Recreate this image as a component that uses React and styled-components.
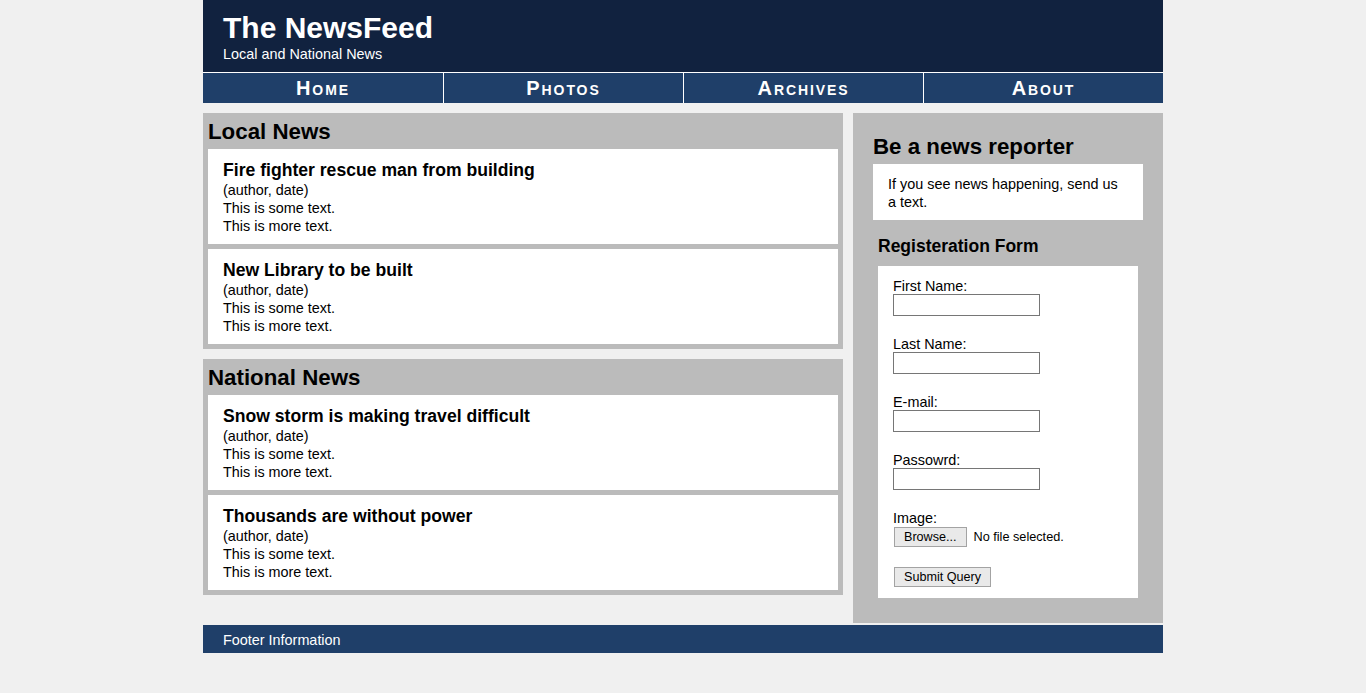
import React from "react";
import styled, { createGlobalStyle } from "styled-components";

const Global = createGlobalStyle`
  html, body { margin: 0; padding: 0; }
  body {
    background: #f0f0f0;
    font-family: "Liberation Sans", Arial, sans-serif;
    color: #000;
  }
`;

const Page = styled.div`
  width: 960px;
  margin: 0 auto;
`;

const Header = styled.header`
  background: #11223f;
  padding: 11px 20px 9px;
  color: #fff;
`;

const Title = styled.h1`
  margin: 0;
  font-size: 30px;
  line-height: 34px;
  font-weight: bold;
`;

const Subtitle = styled.div`
  font-size: 14.4px;
  line-height: 18px;
`;

const Nav = styled.nav`
  display: grid;
  grid-template-columns: repeat(4, 1fr);
  background: #1f3f69;
  border-top: 1px solid #fff;
`;

const NavItem = styled.a`
  display: block;
  height: 30px;
  line-height: 30px;
  text-align: center;
  color: #fff;
  text-decoration: none;
  font-size: 20px;
  font-weight: bold;
  font-variant: small-caps;
  letter-spacing: 1.9px;
  border-left: ${(p) => (p.$first ? "none" : "1px solid #fff")};
`;

const Main = styled.main`
  display: flex;
  align-items: flex-start;
  gap: 10px;
  margin-top: 10px;
`;

const LeftCol = styled.div`
  width: 640px;
  display: flex;
  flex-direction: column;
  gap: 10px;
`;

const Section = styled.section`
  background: #bbbbbb;
  padding: 6px 5px 5px;
  display: flex;
  flex-direction: column;
  gap: 5px;
`;

const SectionTitle = styled.h2`
  margin: 0;
  font-size: 22.3px;
  line-height: 25px;
  font-weight: bold;
`;

const Article = styled.article`
  background: #fff;
  padding: 11px 15px 9px;
`;

const ArticleTitle = styled.h3`
  margin: 0;
  font-size: 17.6px;
  line-height: 21px;
  font-weight: bold;
`;

const Line = styled.p`
  margin: 0;
  font-size: 14.4px;
  line-height: 18px;
`;

const RightCol = styled.aside`
  width: 310px;
  background: #bbbbbb;
  padding: 21px 20px 25px;
  box-sizing: border-box;
`;

const AsideTitle = styled.h2`
  margin: 0 0 5px;
  font-size: 22.3px;
  line-height: 25px;
  font-weight: bold;
`;

const Note = styled.div`
  background: #fff;
  padding: 11px 15px 9px;
  font-size: 14.4px;
  line-height: 18px;
`;

const FormWrap = styled.div`
  margin: 16px 5px 0;
`;

const FormTitle = styled.h3`
  margin: 0 0 9px;
  font-size: 17.5px;
  line-height: 21px;
  font-weight: bold;
`;

const Form = styled.form`
  background: #fff;
  padding: 10px 15px 11px;
`;

const Field = styled.div`
  margin-bottom: ${(p) => p.$gap || "18px"};
`;

const Label = styled.label`
  display: block;
  padding-top: 2px;
  font-size: 14.4px;
  line-height: 16px;
`;

const TextInput = styled.input`
  display: block;
  box-sizing: border-box;
  width: 147px;
  height: 22px;
  margin: 0;
  border: 1px solid #767676;
  background: #fff;
  padding: 1px 3px;
`;

const FileRow = styled.div`
  display: flex;
  align-items: center;
  height: 22px;
`;

const Button = styled.button`
  box-sizing: border-box;
  height: 20px;
  margin: 0 0 0 1px;
  padding: 0 9px;
  border: 1px solid #a3a3a3;
  background: #e9e9e9;
  color: #000;
  font-family: "Liberation Sans", Arial, sans-serif;
  font-size: 12.6px;
  line-height: 18px;
`;

const FileStatus = styled.span`
  margin-left: 7px;
  font-size: 12.7px;
`;

const Footer = styled.footer`
  margin-top: 2px;
  background: #1f3f69;
  color: #fff;
  height: 28px;
  box-sizing: border-box;
  padding: 2px 20px 0;
  line-height: 26px;
  font-size: 14.4px;
`;

const local = [
  "Fire fighter rescue man from building",
  "New Library to be built",
];
const national = [
  "Snow storm is making travel difficult",
  "Thousands are without power",
];

function NewsSection({ title, items }) {
  return (
    <Section>
      <SectionTitle>{title}</SectionTitle>
      {items.map((t) => (
        <Article key={t}>
          <ArticleTitle>{t}</ArticleTitle>
          <Line>(author, date)</Line>
          <Line>This is some text.</Line>
          <Line>This is more text.</Line>
        </Article>
      ))}
    </Section>
  );
}

export default function App() {
  return (
    <>
      <Global />
      <Page>
        <Header>
          <Title>The NewsFeed</Title>
          <Subtitle>Local and National News</Subtitle>
        </Header>
        <Nav>
          <NavItem $first href="#">Home</NavItem>
          <NavItem href="#">Photos</NavItem>
          <NavItem href="#">Archives</NavItem>
          <NavItem href="#">About</NavItem>
        </Nav>
        <Main>
          <LeftCol>
            <NewsSection title="Local News" items={local} />
            <NewsSection title="National News" items={national} />
          </LeftCol>
          <RightCol>
            <AsideTitle>Be a news reporter</AsideTitle>
            <Note>If you see news happening, send us a text.</Note>
            <FormWrap>
              <FormTitle>Registeration Form</FormTitle>
              <Form onSubmit={(e) => e.preventDefault()}>
                <Field>
                  <Label>First Name:</Label>
                  <TextInput type="text" />
                </Field>
                <Field>
                  <Label>Last Name:</Label>
                  <TextInput type="text" />
                </Field>
                <Field>
                  <Label>E-mail:</Label>
                  <TextInput type="text" />
                </Field>
                <Field>
                  <Label>Passowrd:</Label>
                  <TextInput type="password" />
                </Field>
                <Field $gap="19px">
                  <Label>Image:</Label>
                  <FileRow>
                    <Button type="button">Browse...</Button>
                    <FileStatus>No file selected.</FileStatus>
                  </FileRow>
                </Field>
                <Button type="submit">Submit Query</Button>
              </Form>
            </FormWrap>
          </RightCol>
        </Main>
        <Footer>Footer Information</Footer>
      </Page>
    </>
  );
}
